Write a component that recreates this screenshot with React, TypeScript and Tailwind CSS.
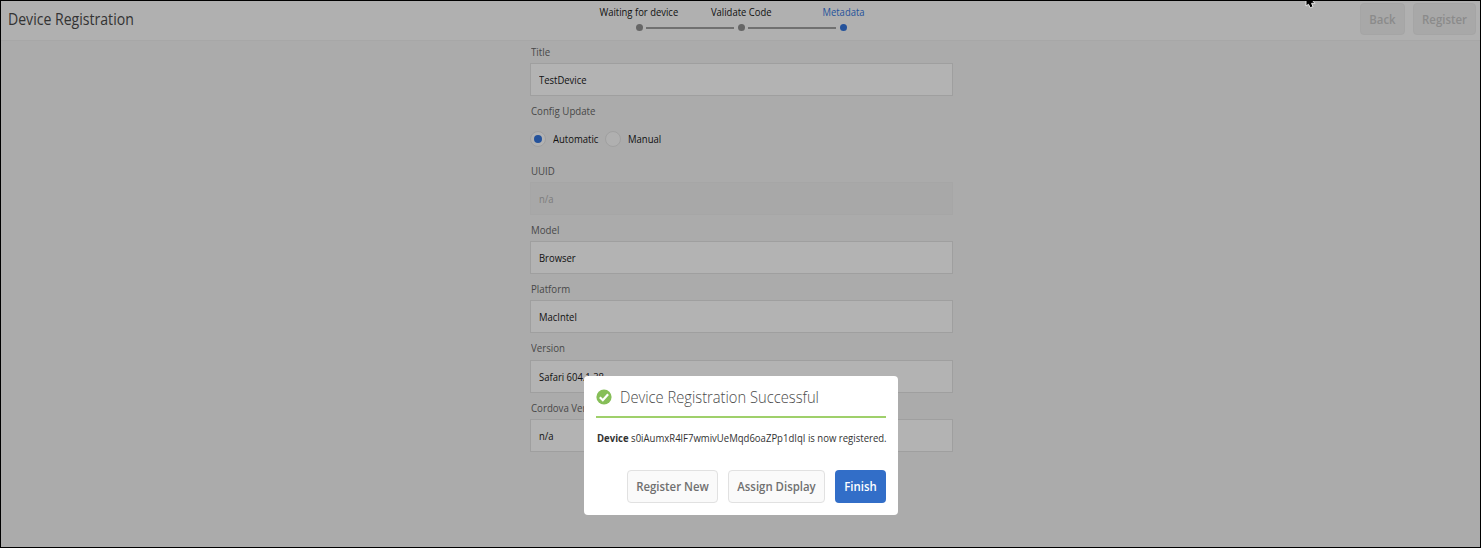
import { ReactNode } from "react";

function Field({ label, children }: { label: string; children: ReactNode }) {
  return (
    <div className="h-[59.3px]">
      <div className="ml-[0.5px] h-[22.3px] origin-left scale-x-[0.88] text-[11px] leading-[22px] text-[#484848]">{label}</div>
      {children}
    </div>
  );
}

function Input({ value, disabled }: { value: string; disabled?: boolean }) {
  return (
    <div
      className={
        disabled
          ? "h-[33px] border border-[#a6a6a6] bg-[#a8a8a8] pl-[8px] text-[11px] leading-[31px] text-[#7c7c7c]"
          : "h-[33px] border border-[#9f9f9f] bg-[#b3b3b3] pl-[8px] text-[11px] leading-[31px] font-medium text-[#111]"
      }
    >
      <div className="origin-left scale-x-[0.86]">{value}</div>
    </div>
  );
}

function Step({ label, active }: { label: string; active?: boolean }) {
  return (
    <div className={active ? "flex w-[102px] flex-col items-center text-[#24529b]" : "flex w-[102px] flex-col items-center text-[#111]"}>
      <div className="h-[23px] scale-x-[0.86] text-[11px] leading-[22px] font-medium whitespace-nowrap">{label}</div>
      <div className="flex w-full items-center justify-center">
        <span className={active ? "size-[7px] rounded-full bg-[#24529b]" : "size-[7px] rounded-full bg-[#666]"} />
      </div>
    </div>
  );
}

function ButtonText({ children }: { children: ReactNode }) {
  return <span className="flex scale-x-[0.95] justify-center pt-px whitespace-nowrap">{children}</span>;
}

export default function App() {
  return (
    <div className="relative h-[548px] w-[1481px] overflow-hidden border border-black bg-[#ababab] font-['Open_Sans',sans-serif]">
      <header className="relative flex h-[40px] border-b border-[#a7a7a7] bg-[#b0b0b0]">
        <h1 className="ml-[7px] w-[580px] origin-left scale-x-[0.88] text-[16px] leading-[37px] text-[#333]">Device Registration</h1>
        <div className="relative flex">
          <Step label="Waiting for device" />
          <Step label="Validate Code" />
          <Step label="Metadata" active />
          <span className="absolute top-[26px] left-[58px] h-[1.5px] w-[88px] bg-[#707070]" />
          <span className="absolute top-[26px] left-[160px] h-[1.5px] w-[88px] bg-[#707070]" />
        </div>
        <div className="ml-auto flex gap-2 pt-[2px] pr-[4.5px] text-[12px] font-semibold text-[#8b8b8b]">
          <button className="h-[32px] w-[45px] rounded-[4px] border border-[#a5a5a5] bg-[#a8a8a8]"><ButtonText>Back</ButtonText></button>
          <button className="h-[32px] w-[63px] rounded-[4px] border border-[#a5a5a5] bg-[#a8a8a8]"><ButtonText>Register</ButtonText></button>
        </div>
      </header>

      <main className="ml-[529px] w-[423px]">
        <Field label="Title"><Input value="TestDevice" /></Field>
        <Field label="Config Update">
          <div className="flex h-[33px] items-center text-[11px] font-medium text-[#111]">
            <span className="flex size-4 items-center justify-center rounded-full border border-[#a0a0a0] bg-[#b2b2b2]">
              <span className="size-2 rounded-full bg-[#24529b]" />
            </span>
            <span className="ml-[7px] w-[52px] origin-left scale-x-[0.865]">Automatic</span>
            <span className="size-4 rounded-full border border-[#a0a0a0] bg-[#b0b0b0]" />
            <span className="ml-[7px] origin-left scale-x-[0.865]">Manual</span>
          </div>
        </Field>
        <Field label="UUID"><Input value="n/a" disabled /></Field>
        <Field label="Model"><Input value="Browser" /></Field>
        <Field label="Platform"><Input value="MacIntel" /></Field>
        <Field label="Version"><Input value="Safari 604.1.38" /></Field>
        <Field label="Cordova Version"><Input value="n/a" /></Field>
      </main>

      <section className="absolute top-[374.5px] left-[583px] h-[139px] w-[314.4px] rounded-[4px] bg-white px-3 pt-[8px]">
        <div className="flex h-[34px] items-start border-b-2 border-[#9fd06b]">
          <svg viewBox="0 0 16 16" className="mt-[5.5px] size-[16px] shrink-0">
            <circle cx="8" cy="8" r="7.6" fill="#86be58" />
            <path d="M3.8 8.2l3 3 5.3-6" fill="none" stroke="#fff" strokeWidth="2.2" />
          </svg>
          <h2 className="ml-[7.5px] origin-left scale-x-[0.92] text-[16px] leading-[27px] font-light whitespace-nowrap text-[#4b4b4b]">Device Registration Successful</h2>
        </div>
        <p className="mt-[12px] ml-[0.5px] origin-left scale-x-[0.868] text-[11px] leading-[16px] whitespace-nowrap text-[#323232]">
          <b>Device</b> s0iAumxR4lF7wmivUeMqd6oaZPp1dIqI is now registered.
        </p>
        <div className="mt-[24px] flex justify-end gap-[10px] text-[12px] font-semibold text-[#707070]">
          <button className="h-[33px] w-[91px] rounded-[4px] border border-[#e1e1e1] bg-[#fafafa]"><ButtonText>Register New</ButtonText></button>
          <button className="h-[33px] w-[97px] rounded-[4px] border border-[#e1e1e1] bg-[#fafafa]"><ButtonText>Assign Display</ButtonText></button>
          <button className="h-[33px] w-[51px] rounded-[4px] bg-[#326ec8] text-white"><ButtonText>Finish</ButtonText></button>
        </div>
      </section>

      <svg viewBox="0 0 12 10" className="absolute top-[-1px] left-[1303px] h-[10px] w-[12px]">
        <path d="M2 -1V6L4.500 4.300L6.200 7.800L9 6.700L7.600 3.300H11L7 -1Z" fill="#000" stroke="#e8e8e8" strokeWidth="1" />
        <path d="M0 .5H12" stroke="#000" />
      </svg>
    </div>
  );
}
